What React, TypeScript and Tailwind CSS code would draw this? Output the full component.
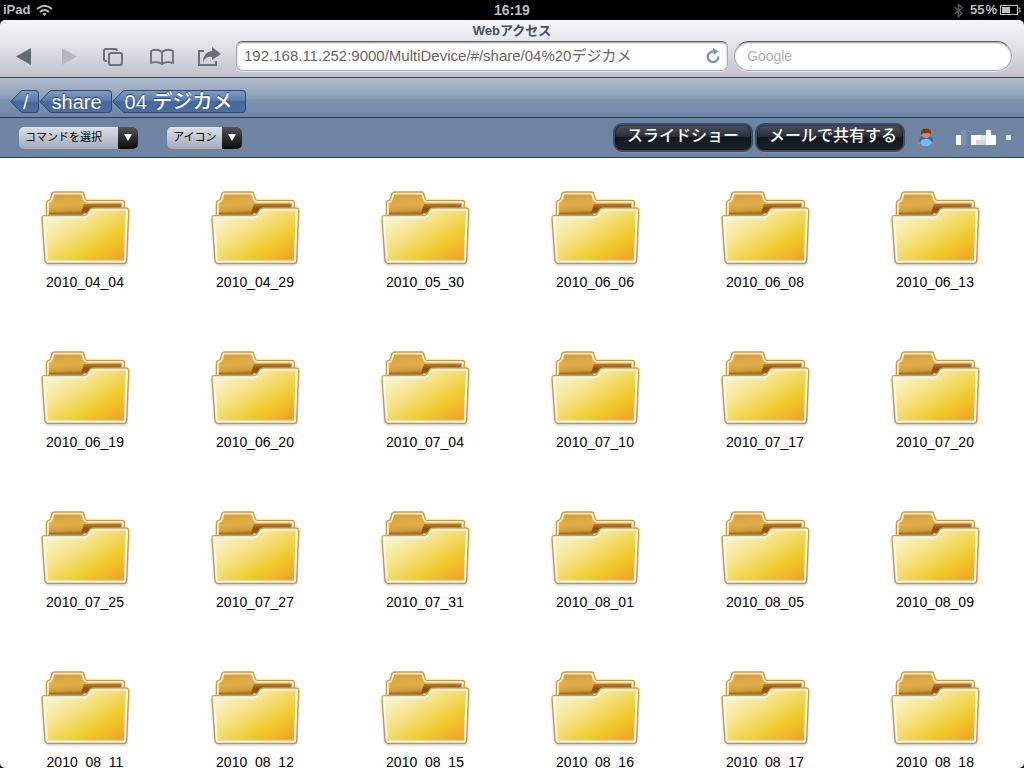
import type { ReactNode } from "react";

const FOLDERS = [
  "2010_04_04", "2010_04_29", "2010_05_30", "2010_06_06", "2010_06_08", "2010_06_13",
  "2010_06_19", "2010_06_20", "2010_07_04", "2010_07_10", "2010_07_17", "2010_07_20",
  "2010_07_25", "2010_07_27", "2010_07_31", "2010_08_01", "2010_08_05", "2010_08_09",
  "2010_08_11", "2010_08_12", "2010_08_15", "2010_08_16", "2010_08_17", "2010_08_18",
];

const CRUMBS = ["/", "share", "04 デジカメ"];

const FOLDER_BACK =
  "M49 108 L49 69 Q50 64 55 62 Q60 61 62 55 L66 40 Q68 36 74 36 L155 36 Q160 36 161 41 L166 57 Q168 61 172 61 L277 61 Q284 62 283 69 L281 108 Z";
const FOLDER_FRONT =
  "M41 107 L162 107 Q168 106 171 102 L180 88 Q184 84 190 84 L288 84 Q296 85 296 91 L290 243 Q289 250 282 250 L53 250 Q46 249 45 242 L36 113 Q36 108 41 107 Z";

// Shared folder artwork, drawn once and referenced by every grid item
function FolderSprite() {
  return (
    <svg className="absolute h-0 w-0" aria-hidden="true">
      <defs>
        <linearGradient id="folder-back" x1="0" y1="0" x2="0.2" y2="1">
          <stop offset="0" stopColor="#d39a30" />
          <stop offset="0.55" stopColor="#e0b04c" />
          <stop offset="0.8" stopColor="#cf9a35" />
          <stop offset="1" stopColor="#9a5f12" />
        </linearGradient>
        <linearGradient id="folder-slot" x1="0" y1="0" x2="0" y2="1">
          <stop offset="0" stopColor="#b87c2c" />
          <stop offset="0.4" stopColor="#8f4f0c" />
          <stop offset="1" stopColor="#a8681e" />
        </linearGradient>
        <linearGradient id="folder-front" x1="0.05" y1="0.05" x2="0.95" y2="0.98">
          <stop offset="0" stopColor="#fdf8dc" />
          <stop offset="0.35" stopColor="#f6e48c" />
          <stop offset="0.68" stopColor="#f0cb2d" />
          <stop offset="1" stopColor="#f59b20" />
        </linearGradient>
        <linearGradient id="folder-edge" x1="0" y1="0" x2="0" y2="1">
          <stop offset="0" stopColor="#e29a35" />
          <stop offset="1" stopColor="#cf8a45" />
        </linearGradient>
        <clipPath id="clip-back"><path d={FOLDER_BACK} /></clipPath>
        <clipPath id="clip-front"><path d={FOLDER_FRONT} /></clipPath>
        <filter id="folder-shadow" x="-10%" y="-10%" width="120%" height="120%">
          <feGaussianBlur stdDeviation="4" />
        </filter>
        <filter id="folder-glow" x="-10%" y="-10%" width="120%" height="120%">
          <feGaussianBlur stdDeviation="2" />
        </filter>
      </defs>
      <symbol id="folder" viewBox="15 18 300 252">
        <path d={FOLDER_FRONT} transform="translate(0 4)" fill="#000" opacity="0.3" filter="url(#folder-shadow)" />
        <path d={FOLDER_BACK} fill="url(#folder-back)" />
        <path d="M162 72 L274 72 L274 90 L150 108 Z" fill="url(#folder-slot)" />
        <path d="M54 98 L166 98 L166 110 L54 110 Z" fill="#8f5510" opacity="0.6" filter="url(#folder-glow)" />
        <g clipPath="url(#clip-back)">
          <path d={FOLDER_BACK} fill="none" stroke="#fff2d8" strokeWidth="15" filter="url(#folder-glow)" />
        </g>
        <path d="M56 103 H160" stroke="#8f5510" strokeWidth="8" opacity="0.7" />
        <path d={FOLDER_BACK} fill="none" stroke="#dc9432" strokeWidth="4" />
        <path d={FOLDER_FRONT} fill="url(#folder-front)" />
        <g clipPath="url(#clip-front)">
          <path d={FOLDER_FRONT} fill="none" stroke="#fffdf2" strokeWidth="17" filter="url(#folder-glow)" />
        </g>
        <path d={FOLDER_FRONT} fill="none" stroke="url(#folder-edge)" strokeWidth="4" />
      </symbol>
    </svg>
  );
}

function StatusBar() {
  return (
    <div className="grid h-5 shrink-0 grid-cols-3 items-center bg-black px-[3px] text-[13px] font-bold leading-5 text-[#bfbfbf]">
      <div className="flex items-center gap-1.5">
        <span>iPad</span>
        <svg width="17" height="13" viewBox="0 0 17 13" fill="none" stroke="#bfbfbf" strokeWidth="2">
          <path d="M1 5 Q8.500 -1.500 16 5" />
          <path d="M4 8 Q8.500 4 13 8" />
          <path d="M6.200 9.800 Q8.500 8.200 10.800 9.800 L8.500 12 Z" fill="#bfbfbf" stroke="none" />
        </svg>
      </div>
      <span className="text-center text-[14px]">16:19</span>
      <div className="flex items-center justify-end">
        <svg className="mr-1.5" width="11" height="15" viewBox="0 0 11 15" fill="none" stroke="#555" strokeWidth="1.500">
          <path d="M1.500 4 L9 10.500 L5.500 13.500 V1.500 L9 4.500 L1.500 11" />
        </svg>
        <span>55</span>
        <span className="ml-px">%</span>
        <svg className="ml-[3px]" width="21" height="11" viewBox="0 0 21 11">
          <rect x="0.500" y="0.500" width="17" height="9" fill="none" stroke="#bfbfbf" />
          <rect x="2" y="2" width="8" height="6" fill="#bfbfbf" />
          <path d="M18 3 H20 V7 H18" fill="none" stroke="#bfbfbf" />
        </svg>
      </div>
    </div>
  );
}

function NavButton({ label, disabled, children }: { label: string; disabled?: boolean; children: ReactNode }) {
  return (
    <button type="button" aria-label={label} disabled={disabled} className="w-[46px]">
      <svg width="46" height="30" viewBox="0 0 46 30" fill="none" stroke="#6a6f78" strokeWidth="2">
        {children}
      </svg>
    </button>
  );
}

function BrowserBar() {
  return (
    <header className="shrink-0 rounded-t-[5px] border-b border-[#3f434b] bg-linear-to-b from-[#f6f6f8] via-[#dfe0e6] to-[#bfc0cb] pb-1.5">
      <h1 className="h-[21px] text-center text-[13px] font-bold leading-[21px] text-[#494e66]">Webアクセス</h1>
      <div className="flex h-[30px] items-center pr-3">
        <nav className="flex w-[236px] shrink-0">
          <NavButton label="戻る">
            <path d="M31 7 V24 L16 15.500 Z" fill="#646973" stroke="none" />
          </NavButton>
          <NavButton label="進む" disabled>
            <path d="M16 7 V24 L31 15.500 Z" fill="#b4b7c0" stroke="none" />
          </NavButton>
          <NavButton label="ページ">
            <path d="M15 20 H14 Q12 20 12 18 V10 Q12 8 14 8 H23 Q25 8 25 10" />
            <rect x="17" y="12" width="13" height="12" rx="2" />
          </NavButton>
          <NavButton label="ブックマーク">
            <path d="M13 22 V10 Q19 7 24 11 Q29 7 35 10 V22 Q28 20 24 23 Q20 20 13 22 Z M24 11 V23" strokeWidth="1.800" />
          </NavButton>
          <NavButton label="共有">
            <path d="M20 10 H15 V24 H32 V20" />
            <path d="M28 6 L37 13 L28 19 V16 Q22 15 19 21 Q19 11 28 10 Z" fill="#6a6f78" stroke="none" />
          </NavButton>
        </nav>
        <form className="flex h-[30px] flex-1 items-center rounded-[6px] border border-[#a9abb2] border-t-[#5e6066] bg-white px-[7px] shadow-[inset_0_1px_2px_#0006,0_1px_0_#e4e5ea]">
          <input
            type="text"
            aria-label="アドレス"
            defaultValue="192.168.11.252:9000/MultiDevice/#/share/04%20デジカメ"
            className="min-w-0 flex-1 bg-transparent text-[15px] leading-5 text-[#666] outline-none"
          />
          <button type="button" aria-label="再読み込み">
            <svg width="14" height="16" viewBox="0 0 14 16" fill="none" stroke="#7d93b2" strokeWidth="2.400">
              <path d="M7.500 3.500 A5.300 5.300 0 1 0 12.300 8.500" />
              <path d="M7 0 L12.500 3.200 L7.500 7 Z" fill="#7d93b2" stroke="none" />
            </svg>
          </button>
        </form>
        <input
          type="search"
          aria-label="Google"
          placeholder="Google"
          className="ml-1.5 h-[30px] w-[278px] rounded-full border border-[#a9abb2] border-t-[#5e6066] bg-white px-3 text-[14px] leading-5 shadow-[inset_0_1px_2px_#0006,0_1px_0_#e4e5ea] outline-none placeholder:text-[#b0b0b0]"
        />
      </div>
    </header>
  );
}

function Crumb({ label }: { label: string }) {
  return (
    <a href="#" className="group flex h-[23px] text-[20px] font-medium leading-[22px] text-white [text-shadow:0_-1px_1px_#24416e]">
      <svg width="14" height="23" viewBox="0 0 14 23">
        <defs>
          <linearGradient id="crumb-tip" x1="0" y1="0" x2="0" y2="1">
            <stop offset="0" stopColor="#7f9cc5" />
            <stop offset="0.5" stopColor="#5578ab" />
            <stop offset="0.5" stopColor="#456a9f" />
            <stop offset="1" stopColor="#4a6da3" />
          </linearGradient>
        </defs>
        <path d="M14 0.500 H13 Q11 0.500 10 2 L0.800 11.500 L10 21 Q11 22.500 13 22.500 H14" fill="url(#crumb-tip)" stroke="#33496f" />
      </svg>
      <span className="-ml-px rounded-r-[4px] border border-l-0 border-[#33496f] bg-[linear-gradient(#7f9cc5,#5578ab_50%,#456a9f_50%,#4a6da3)] pr-[9px] group-last:pr-[13px]">
        {label}
      </span>
    </a>
  );
}

function Dropdown({ label, className }: { label: string; className: string }) {
  return (
    <div className={`relative h-[22px] ${className}`}>
      <select
        aria-label={label}
        className="block h-full w-full appearance-none rounded-[5px] bg-linear-to-b from-[#dde1e7] to-[#a1abb9] pl-1.5 pr-5 text-[11px] text-black outline-none"
      >
        <option>{label}</option>
      </select>
      <span className="pointer-events-none absolute inset-y-0 right-0 flex w-5 items-center justify-center rounded-r-[5px] bg-linear-to-b from-[#555] to-[#0c0c0c]">
        <svg width="8" height="7" viewBox="0 0 8 7" fill="#fff">
          <path d="M0 0 H8 L4 7 Z" />
        </svg>
      </span>
    </div>
  );
}

function ActionButton({ className, children }: { className: string; children: ReactNode }) {
  return (
    <button
      type="button"
      className={`h-[29px] rounded-[9px] border-2 border-[#3b4c65] bg-[linear-gradient(#4b525c,#272c34_50%,#13171e_50%,#1d232b)] pb-1 text-[16px] font-medium leading-5 text-white shadow-[inset_0_0_2px_#000,0_1px_0_#8395ae] ${className}`}
    >
      {children}
    </button>
  );
}

function UserIcon() {
  return (
    <svg width="18" height="19" viewBox="0 0 18 19">
      <path d="M3.500 9 Q9 6 14.500 9 L17 15 Q17 17.500 14 17 H4 Q1 17.500 1 15 Z" fill="#2467c4" />
      <circle cx="2.500" cy="15.200" r="1.700" fill="#b98560" />
      <circle cx="15.500" cy="15.200" r="1.700" fill="#b98560" />
      <ellipse cx="9" cy="14.500" rx="5.500" ry="3.800" fill="#72bdff" />
      <circle cx="9" cy="6" r="4.300" fill="#d38a4e" />
      <path d="M4 6.500 Q3 0.500 9 0.500 Q15 0.500 14 6.500 Q13 4.800 9 5.200 Q5.500 5 4 6.500 Z" fill="#7b3a0c" />
    </svg>
  );
}

// User name, obscured with a mosaic
function MaskedName() {
  return (
    <svg width="55" height="15" viewBox="0 0 55 15" shapeRendering="crispEdges" role="img" aria-label="ユーザー">
      <path d="M0 5 H5 V15 H0 Z" fill="#f4f6f9" />
      <path d="M5 0 H10 V15 H5 Z" fill="#7d92b0" />
      <path d="M15 5 H40 V15 H15 Z M30 0 H35 V5 H30 Z" fill="#fbfcfe" />
      <path d="M25 5 H30 V10 H25 Z" fill="#e1e5ec" />
      <path d="M20 10 H30 V15 H20 Z" fill="#d2d9e3" />
      <path d="M50 5 H55 V10 H50 Z" fill="#e9eef4" />
    </svg>
  );
}

export default function App() {
  return (
    <div className="h-screen bg-black font-['Liberation_Sans','Noto_Sans_CJK_JP',sans-serif]">
      <FolderSprite />
      <div className="flex h-full flex-col">
        <StatusBar />
        <BrowserBar />
        <nav className="flex h-10 shrink-0 items-end border-b border-[#2d3b50] bg-[linear-gradient(#b1bdcd,#889bb6_55%,#7f94b1_55%,#7086a5)] pb-1 pl-2.5">
          {CRUMBS.map((crumb) => (
            <Crumb key={crumb} label={crumb} />
          ))}
        </nav>
        <div className="flex h-10 shrink-0 items-center border-b border-[#2d3b50] bg-[#6d84a2] pl-[19px] pr-[13px]">
          <Dropdown label="コマンドを選択" className="w-[119px]" />
          <Dropdown label="アイコン" className="ml-[29px] w-[75px]" />
          <div className="ml-auto flex items-center">
            <div className="mr-3 flex gap-0.5">
              <ActionButton className="px-3">スライドショー</ActionButton>
              <ActionButton className="pl-3 pr-1.5">メールで共有する</ActionButton>
            </div>
            <UserIcon />
            <span className="ml-[21px]">
              <MaskedName />
            </span>
          </div>
        </div>
        <main className="min-h-0 flex-1 overflow-y-auto rounded-b-[5px] bg-white [scrollbar-width:none]">
          <ul className="grid grid-cols-[repeat(auto-fill,170px)]">
            {FOLDERS.map((name) => (
              <li key={name} className="h-40 pt-7">
                <a href="#" className="flex flex-col items-center text-[14px] leading-5 text-black">
                  <svg width="100" height="84" aria-hidden="true">
                    <use href="#folder" />
                  </svg>
                  <span className="mt-0.5">{name}</span>
                </a>
              </li>
            ))}
          </ul>
        </main>
      </div>
    </div>
  );
}
